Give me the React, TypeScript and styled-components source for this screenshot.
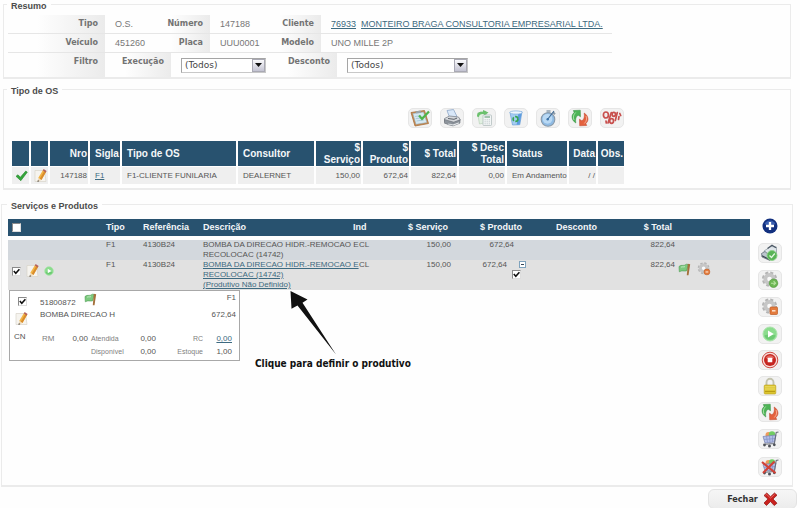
import React from 'react';
import styled, { createGlobalStyle } from 'styled-components';

const navy = '#28526f';
const line = '#ebebeb';
const linkColor = '#3d6a80';
const sans = '"Liberation Sans", Arial, sans-serif';
const verdana = '"DejaVu Sans", Verdana, sans-serif';
const tahoma = '"DejaVu Sans Condensed", "DejaVu Sans", Tahoma, sans-serif';

const GlobalStyle = createGlobalStyle`
  *, *::before, *::after { box-sizing: border-box; }
  body {
    margin: 0;
    background: #fefefe;
    color: #555;
    font: 8px/10px ${sans};
  }
  svg { display: block; flex: none; }
`;

/* ---------- shared parts ---------- */

const Page = styled.main`
  display: flex;
  flex-direction: column;
`;

const Section = styled.fieldset<{ $wide?: boolean; $above?: number; $below?: number }>`
  min-width: 0;
  margin: ${p => p.$above ?? 0}px ${p => (p.$wide ? 7 : 9)}px 0 ${p => (p.$wide ? 1 : 3)}px;
  padding: 0 ${p => (p.$wide ? 9 : 4)}px ${p => p.$below ?? 0}px ${p => (p.$wide ? 6 : 4)}px;
  border: 2px solid ${line};
  border-width: 1px 1px 2px;
`;

const Legend = styled.legend`
  margin-left: -1px;
  padding: 4px 4px 0;
  color: #4c4c4c;
  font-weight: bold;
  font-size: 9px;
  line-height: 12px;
`;

const Link = styled.a`
  color: ${linkColor};
  text-decoration: underline;
`;

const Check = styled.input.attrs({ type: 'checkbox' })`
  appearance: none;
  display: block;
  flex: none;
  width: 9px;
  height: 9px;
  margin: 0;
  border: 1px solid #8a8a8a;
  border-right-color: #ddd;
  border-bottom-color: #ddd;
  background: #fff center / 7px 7px no-repeat;
  &:checked {
    background-image: url("data:image/svg+xml,%3Csvg xmlns='http://www.w3.org/2000/svg' viewBox='0 0 7 7'%3E%3Cpath d='M.8 3l2 2.2L6.400 1.300' fill='none' stroke='%23111' stroke-width='1.600'/%3E%3C/svg%3E");
  }
`;

const IconButton = styled.button<{ $bare?: boolean }>`
  display: flex;
  align-items: center;
  justify-content: center;
  width: 24px;
  height: 20px;
  padding: 0;
  border: 1px solid ${p => (p.$bare ? 'transparent' : '#e6e6e6')};
  border-radius: 5px;
  background: ${p => (p.$bare ? 'none' : '#f2f2f2')};
  cursor: pointer;
`;

const MiniButton = styled.button`
  display: block;
  flex: none;
  padding: 0;
  border: 0;
  background: none;
  cursor: pointer;
`;

/* ---------- icons ---------- */

const Svg = ({ w = 20, h = 18, children }: { w?: number; h?: number; children: React.ReactNode }) => (
  <svg width={w} height={h} viewBox={`0 0 ${w} ${h}`} fill="none" aria-hidden="true">
    {children}
  </svg>
);

const ClipboardIcon = () => (
  <Svg>
    <path d="M1 3.500L14.500 1.500 18.500 14.500 5 17z" fill="#c98a4e" stroke="#a8703c" strokeWidth=".8" />
    <path d="M2.800 4.600L13.500 3l3.400 10.600L6 15.300z" fill="#d6e8f1" stroke="#8fa9b8" strokeWidth=".5" />
    <path d="M5 7.500l6-.9M5.700 9.700l7-1M6.500 12l7.500-1.100" stroke="#9ec3d8" strokeWidth=".8" />
    <path d="M5.500 2.500L10.500 1.500l.7 2.200-5 .9z" fill="#9ba6ac" />
    <path d="M9 6.500l3 3.300L19 2.500" stroke="#4fb54b" strokeWidth="2.200" />
  </Svg>
);

const PrinterIcon = () => (
  <Svg>
    <path d="M5 1.500l6.500-1 3.500 7-7 2z" fill="#d8e7f8" stroke="#8ea6c6" strokeWidth=".8" />
    <path d="M2.500 9.500l5-2.500 9 1 2 3-6 2.500-10-1z" fill="#d5d8dc" stroke="#777d85" strokeWidth=".7" />
    <path d="M2.500 10.500v3.700l8 2.500 7.500-2.800v-3l-6.500 2.300z" fill="#8d949c" stroke="#666c74" strokeWidth=".6" />
    <path d="M6 14.200l5 1 5.500-2 1.500 1-6.500 2.600-6-1.300z" fill="#f4f6f8" stroke="#7a828b" strokeWidth=".5" />
    <path d="M6 9.500l6 .8 3-1.200" stroke="#4e545b" strokeWidth=".9" />
  </Svg>
);

const SheetsIcon = () => (
  <Svg>
    <path d="M3.500 4l8-2 2 11-8 2z" fill="#e2f0e2" stroke="#b1cfb2" strokeWidth=".6" />
    <path d="M3 7.500C3 3 6.500 2.500 9 3V1l5.500 2.500L9.800 7V5C7 4.700 5 5.500 5 8z" fill="#6bc16d" />
    <rect x="9" y="6" width="8.500" height="10.500" rx=".8" fill="#f3f6f6" stroke="#aab7b7" strokeWidth=".7" />
    <path d="M10.500 8h5.500" stroke="#8ab398" strokeWidth="1.500" />
    <path d="M10.500 10.800h5.500M10.500 12.800h5.500M10.500 14.800h5.500" stroke="#b9c3c5" strokeWidth=".8" strokeDasharray="1.300 .8" />
  </Svg>
);

const BinIcon = () => (
  <Svg>
    <path d="M4 3.500l12-.8-2.200 13L6.500 16z" fill="#a5cdf3" stroke="#6b9fd6" strokeWidth=".7" />
    <path d="M12.500 3.500l3.300-.5-2.200 12.500-3 .3z" fill="#5c9ce0" />
    <ellipse cx="10" cy="3.500" rx="6.300" ry="1.600" fill="#eef6fd" stroke="#80aedc" strokeWidth=".7" />
    <circle cx="9.500" cy="10" r="2.400" stroke="#35a552" strokeWidth="1.700" strokeDasharray="3.600 1.300" />
  </Svg>
);

const StopwatchIcon = () => (
  <Svg>
    <path d="M8.500 1h4v3.500h-4z" fill="#a7b4bf" />
    <path d="M15 3.300l2 2" stroke="#8d9ba8" strokeWidth="2" />
    <circle cx="10" cy="10.500" r="6.800" fill="#8fbbe4" stroke="#8999a8" strokeWidth="1.100" />
    <circle cx="9.500" cy="9.800" r="4.900" fill="#b9d9f4" />
    <path d="M9.500 10.500L16 2" stroke="#3f6994" strokeWidth="1.100" />
    <circle cx="9.700" cy="10.300" r="1.200" fill="#3a72a8" />
  </Svg>
);

const RefreshIcon = () => (
  <Svg>
    <path d="M5.800 14C1.200 11 1 5.800 4.200 3.500L3.300 1.500l7-.3.200 6.600-2.300-1.600c-2.300 1-3 3.800-2.400 7.800z" fill="#4db456" stroke="#328a3c" strokeWidth=".5" />
    <path d="M14.200 4c4.600 3 4.800 8.200 1.600 10.500l.9 2-7 .3-.2-6.600 2.300 1.600c2.300-1 3-3.800 2.400-7.800z" fill="#e4613e" stroke="#b83f25" strokeWidth=".5" />
    <path d="M4 11c-1.200-2.500-.6-5.500 1.700-7.500" stroke="#a4e2a3" strokeWidth="1" />
    <path d="M16 7c1.200 2.500.6 5.500-1.700 7.500" stroke="#f7ac91" strokeWidth="1" />
  </Svg>
);

const PercentIcon = () => (
  <Svg>
    <g stroke="#c8504e" strokeWidth="1.700" strokeLinecap="round">
      <ellipse cx="3.900" cy="6" rx="2.500" ry="3" />
      <path d="M9.300 3.500L6 14" />
      <ellipse cx="9.600" cy="12" rx="1.900" ry="2.300" />
      <ellipse cx="11.800" cy="5.300" rx="1.700" ry="2" />
      <path d="M15.300 3.500l-2 8" />
      <path d="M4 12l.3 2M16.500 10.500l.5-3M17.800 4.500l.9 2" />
    </g>
    <path d="M3.700 6h.4M9.500 12h.3" stroke="#f3c3c0" strokeWidth="1.500" />
  </Svg>
);

const TickIcon = () => (
  <Svg w={13} h={12}>
    <path d="M1 6.300l2-1.500 2.300 2.500L10.800 1l1.500 1.200-6.500 8.500z" fill="#35a53a" stroke="#238a2c" strokeWidth=".6" />
  </Svg>
);

const PencilIcon = () => (
  <Svg w={13} h={14}>
    <path d="M1 1.500h9.500L12 12.500H1z" fill="#f6f4ef" stroke="#d8d4ca" strokeWidth=".7" />
    <path d="M9 1l3 2-4.600 8-3.200-2z" fill="#f2b445" />
    <path d="M10.300 1.900l1.700 1.100-4.600 8-1.700-1.100z" fill="#d98c2c" />
    <path d="M9.600 0l3 2-.8 1.400-3-2z" fill="#b5605b" />
    <path d="M4.200 9l3.200 2L3.500 13z" fill="#f0dcbb" />
    <path d="M3.800 11.200l1.500.9-1.800.9z" fill="#333" />
  </Svg>
);

const FlagIcon = () => (
  <Svg w={13} h={13}>
    <path d="M1 3.500c3-2.500 4 .3 7.500-2.300l2 .4-2 6.300C5.500 8.500 4 7 1.300 8.800z" fill="#7cc97e" stroke="#4c9b50" strokeWidth=".6" />
    <path d="M9.800.8l2.400.4-1.700 11H8.800z" fill="#a5713c" />
    <path d="M3 4.200c1.500-.8 2.500.1 4-.6" stroke="#c0ecbf" strokeWidth=".9" />
  </Svg>
);

const GearIcon = ({ badge, size = 18 }: { badge: 'green' | 'orange' | 'orangeDot'; size?: number }) => (
  <svg width={size} height={size} viewBox="0 0 18 18" fill="none" aria-hidden="true">
    <circle cx="8.500" cy="8" r="6.200" stroke="#b4b4b4" strokeWidth="2.800" strokeDasharray="2.900 1.970" />
    <circle cx="8.500" cy="8" r="4.200" stroke="#c6c6c6" strokeWidth="3.800" fill="#fafafa" />
    {badge === 'green' ? (
      <>
        <circle cx="12.500" cy="12.200" r="4.300" fill="#6cb653" stroke="#4d9638" strokeWidth=".6" />
        <path d="M10 12.200h3.500M12.600 10.200l2 2-2 2" stroke="#b7e3a0" strokeWidth="1.100" />
      </>
    ) : (
      <>
        <rect x="9" y="9" width="7.500" height="7.500" rx={badge === 'orangeDot' ? 3.700 : 1} fill="#e37b3d" stroke="#bd5a22" strokeWidth=".7" />
        <path d="M11 12.800h3.500" stroke="#fbdcc5" strokeWidth="1.600" />
      </>
    )}
  </svg>
);

const PlusIcon = () => (
  <Svg w={16} h={16}>
    <circle cx="8" cy="8" r="7.500" fill="#12307f" />
    <path d="M2.500 6a6 6 0 0111 0c-3 1.500-8 1.500-11 0z" fill="#3a5fb0" />
    <path d="M8 4v8M4 8h8" stroke="#fff" strokeWidth="2.300" />
  </Svg>
);

const DriveOkIcon = () => (
  <Svg>
    <path d="M4 7L11 2.500 16.500 3v9L6 14z" fill="#dfe5ea" stroke="#87939e" strokeWidth=".7" />
    <path d="M7.500 4.500L12 1.200l4 2.500" stroke="#4c5865" strokeWidth="1.200" />
    <path d="M1.500 9.500L5 7.500l7 6-2 3-8-3.500z" fill="#bcc6cf" stroke="#56636f" strokeWidth=".7" />
    <path d="M2 11.800l7.500 3.700" stroke="#3a4651" strokeWidth="1.100" />
    <circle cx="12" cy="11.500" r="5" fill="#58b455" stroke="#8fd18b" strokeWidth=".9" />
    <path d="M9.500 11.500l2 2 3.300-4" stroke="#e4f7e2" strokeWidth="1.300" />
  </Svg>
);

const PlayIcon = ({ size = 16 }: { size?: number }) => (
  <svg width={size} height={size} viewBox="0 0 16 16" fill="none" aria-hidden="true">
    <circle cx="8" cy="8" r="7" fill="#8bdc8d" stroke="#a9e3aa" strokeWidth="1" />
    <path d="M2.500 9.500a5.700 5.700 0 0011 0c-3-1.200-8-1.200-11 0z" fill="#6dca73" />
    <path d="M6 4.500L11.800 8 6 11.500z" fill="#fff" />
  </svg>
);

const StopIcon = () => (
  <Svg w={18} h={18}>
    <circle cx="9" cy="9" r="7.800" fill="#f6dcd9" stroke="#cf4b43" strokeWidth="1" />
    <circle cx="9" cy="9" r="6" fill="#c62520" />
    <path d="M4.500 7a5 5 0 019 0c-2.500 1-6.500 1-9 0z" fill="#e2635c" />
    <rect x="6.700" y="6.700" width="4.600" height="4.600" rx=".5" fill="#fff" />
  </Svg>
);

const LockIcon = () => (
  <Svg w={16} h={18}>
    <path d="M4.500 9V5.500a3.500 3.800 0 017 0V9" stroke="#c3c3ae" strokeWidth="1.900" />
    <rect x="2.200" y="8" width="11.600" height="9" rx="1" fill="#dcc52f" stroke="#b9a01c" strokeWidth=".6" />
    <path d="M3 9.800h10M3 12h10" stroke="#f0e27a" strokeWidth=".8" />
    <path d="M3 14.500h10" stroke="#b89c14" strokeWidth="1" />
  </Svg>
);

const CartIcon = ({ removed }: { removed?: boolean }) => (
  <Svg>
    <circle cx="8.500" cy="5" r="3" fill="#ef9a5b" />
    <circle cx="12" cy="4.500" r="3.200" fill="#70cc62" />
    <path d="M3 6.500l13-1.500-1.500 7L5 13z" fill="#b4bfe6" stroke="#7480ae" strokeWidth=".7" />
    <path d="M6.500 6.300l1 6.300M9.500 6l.5 6.300M12.700 5.600l-.4 6.500M4 9.500l11-1" stroke="#8290c6" strokeWidth=".7" />
    <path d="M18.500 2l-2.300.5-1.800 11-9.400.7" stroke="#6a6f7c" strokeWidth="1.100" />
    <g fill="#4e5158">
      <circle cx="4.500" cy="15" r="1.400" />
      <circle cx="9.500" cy="16" r="1.500" />
      <circle cx="14.300" cy="14.800" r="1.400" />
    </g>
    {removed && <path d="M2 4l13.500 11M14.500 3.500L3 15" stroke="#d24237" strokeWidth="2.200" />}
  </Svg>
);

const CloseIcon = () => (
  <Svg w={15} h={14}>
    <path d="M1 3.500L3.800 1l3.700 3.700L11.500 1 14 3.200 10 7l4 4.200-2.800 2.300-3.700-4-4 4L1 11l3.900-4z" fill="#c9211e" stroke="#8f1513" strokeWidth=".7" />
    <path d="M2.500 3.300l1.200-.9 3.800 3.700 4-3.600" stroke="#ee7773" strokeWidth=".8" />
  </Svg>
);

/* ---------- Resumo ---------- */

const Summary = styled.div`
  width: max-content;
  max-width: 100%;
  margin-top: 3px;
`;

const SummaryRow = styled.div<{ $filters?: boolean }>`
  display: ${p => (p.$filters ? 'flex' : 'grid')};
  grid-template-columns: 97px 49px 56px 51px 60px 1fr;
  width: ${p => (p.$filters ? 'max-content' : 'auto')};
  min-height: ${p => (p.$filters ? 24 : 19)}px;
  border-bottom: ${p => (p.$filters ? 0 : 1)}px solid #e6e6e6;
`;

const Label = styled.span<{ $width?: number }>`
  width: ${p => (p.$width ? p.$width + 'px' : 'auto')};
  padding: 1px 7px 0 0;
  background: linear-gradient(to right, #fefefe 30%, #ebebeb);
  color: #737373;
  font: bold 8px/16px ${verdana};
  text-align: right;
`;

const Value = styled.span`
  display: flex;
  gap: 5px;
  padding: 1px 9px 0 10px;
  color: #777;
  font-size: 9px;
  line-height: 16px;
  white-space: nowrap;
`;

const SelectBox = styled.label<{ $width: number }>`
  display: flex;
  align-self: center;
  width: ${p => p.$width}px;
  height: 15px;
  margin: 0 0 0 10px;
  border: 1px solid #a5a5a5;
  border-right-color: #c8c8c8;
  border-bottom-color: #c8c8c8;
  background: #fff;
`;

const Select = styled.select`
  appearance: none;
  flex: 1;
  min-width: 0;
  padding: 0 3px;
  border: 0;
  background: none;
  color: #444;
  font: 9px/13px ${verdana};
`;

const SelectArrow = styled.span`
  display: flex;
  align-items: center;
  justify-content: center;
  width: 13px;
  border: 1px solid #a9a9b4;
  background: linear-gradient(#fafafc, #c3c3d2);
  pointer-events: none;
`;

const Filter = ({ label, width, labelWidth }: { label: string; width: number; labelWidth: number }) => (
  <>
    <Label as="label" htmlFor={label} $width={labelWidth}>{label}</Label>
    <SelectBox $width={width}>
      <Select id={label} defaultValue="all">
        <option value="all">(Todos)</option>
      </Select>
      <SelectArrow>
        <Svg w={7} h={4}><path d="M0 0h7L3.500 4z" fill="#111" /></Svg>
      </SelectArrow>
    </SelectBox>
  </>
);

/* ---------- Tipo de OS ---------- */

const Toolbar = styled.div`
  display: flex;
  gap: 8px;
  margin: 11px 0 12px 400px;
`;

const OrderTable = styled.table`
  table-layout: fixed;
  width: 616px;
  margin-left: 2px;
  border-spacing: 2px 1px;
`;

const OrderHead = styled.th<{ $right?: boolean }>`
  height: 25px;
  padding: ${p => (p.$right ? '0 1px 0 0' : '0 0 0 5px')};
  background: ${navy};
  color: #f4f7f9;
  font: bold 10px/12px ${sans};
  text-align: ${p => (p.$right ? 'right' : 'left')};
`;

const OrderCell = styled.td<{ $right?: boolean; $icon?: boolean }>`
  height: 17px;
  padding: ${p => (p.$icon ? '0 0 0 3px' : p.$right ? '0 1px 0 0' : '0 0 0 5px')};
  background: #efefef;
  text-align: ${p => (p.$right ? 'right' : 'left')};
  white-space: nowrap;
`;

const orderColumns = [
  { title: '', width: 17 },
  { title: '', width: 17 },
  { title: 'Nro', width: 38, right: true },
  { title: 'Sigla', width: 30 },
  { title: 'Tipo de OS', width: 114 },
  { title: 'Consultor', width: 76 },
  { title: '$ Serviço', width: 45, right: true },
  { title: '$ Produto', width: 46, right: true },
  { title: '$ Total', width: 46, right: true },
  { title: '$ Desc Total', width: 46, right: true },
  { title: 'Status', width: 60 },
  { title: 'Data', width: 27, right: true },
  { title: 'Obs.', width: 26, right: true },
];

const orderValues: React.ReactNode[] = [
  <TickIcon />,
  <MiniButton aria-label="Editar"><PencilIcon /></MiniButton>,
  '147188',
  <Link href="#f1">F1</Link>,
  'F1-CLIENTE FUNILARIA',
  'DEALERNET',
  '150,00',
  '672,64',
  '822,64',
  '0,00',
  'Em Andamento',
  '/ /',
  '',
];

const tools = [
  { name: 'Conferir', icon: <ClipboardIcon /> },
  { name: 'Imprimir', icon: <PrinterIcon /> },
  { name: 'Copiar', icon: <SheetsIcon /> },
  { name: 'Lixeira', icon: <BinIcon /> },
  { name: 'Tempo', icon: <StopwatchIcon /> },
  { name: 'Atualizar', icon: <RefreshIcon /> },
  { name: 'Descontos', icon: <PercentIcon /> },
];

/* ---------- Serviços e Produtos ---------- */

const Work = styled.div`
  display: flex;
  align-items: flex-start;
  gap: 8px;
  padding: 4px 1px 8px 0;
`;

const WorkMain = styled.div`
  flex: 1;
  min-width: 0;
  padding-top: 3px;
`;

const ItemTable = styled.table`
  table-layout: fixed;
  width: 100%;
  border-collapse: collapse;
  tbody::before {
    content: '';
    display: block;
    height: 4px;
  }
`;

const ItemHead = styled.th<{ $right?: boolean; $pad?: number }>`
  height: 17px;
  padding: 0 ${p => p.$pad ?? 0}px 0 0;
  background: ${navy};
  color: #f4f7f9;
  font: bold 9px/11px ${sans};
  text-align: ${p => (p.$right ? 'right' : 'left')};
  &:first-child { padding-left: 4px; }
`;

const ItemRow = styled.tr<{ $plain?: boolean }>`
  background: ${p => (p.$plain ? '#e1e1e1' : '#d3d8dd')};
`;

const ItemCell = styled.td<{ $right?: boolean; $pad?: number; $indent?: number }>`
  padding: 0 ${p => p.$pad ?? 0}px 0 ${p => p.$indent ?? 0}px;
  text-align: ${p => (p.$right ? 'right' : 'left')};
  vertical-align: top;
  white-space: nowrap;
`;

const RowTools = styled.div<{ $top?: boolean }>`
  display: flex;
  align-items: center;
  gap: ${p => (p.$top ? 6 : 5)}px;
  padding: ${p => (p.$top ? '2px 0 0 3px' : '4px 0 0 4px')};
`;

const ProductTools = styled.div`
  display: grid;
  grid-template-columns: 56px 1fr;
  column-gap: 5px;
  align-items: center;
  > input { grid-column: 2; }
`;

const Collapse = styled.button`
  display: flex;
  align-items: center;
  justify-content: center;
  width: 7px;
  height: 7px;
  margin: 1px 0 2px 7px;
  padding: 0;
  border: 1px solid #7fa3bd;
  background: #fff;
  &::before {
    content: '';
    width: 3px;
    height: 1px;
    background: #345;
  }
`;

const Below = styled.div`
  display: flex;
  align-items: flex-start;
  gap: 15px;
`;

const ProductBox = styled.section`
  display: grid;
  grid-template-columns: 26px 1fr;
  width: 231px;
  min-height: 71px;
  margin-left: 1px;
  padding: 2px 3px 2px 4px;
  border: 1px solid #a8a8a8;
  background: #fff;
`;

const BoxSide = styled.div`
  display: flex;
  flex-direction: column;
  gap: 6px;
  padding-top: 4px;
  > input { margin-left: 4px; }
  > button { margin-left: 1px; }
`;

const BoxLine = styled.div<{ $first?: boolean }>`
  display: flex;
  align-items: ${p => (p.$first ? 'flex-start' : 'center')};
  gap: 8px;
  height: ${p => (p.$first ? 17 : 10)}px;
  > span:first-child { padding-top: ${p => (p.$first ? 5 : 0)}px; }
  > span:last-child { margin-left: auto; }
`;

const Stock = styled.dl`
  display: grid;
  grid-template-columns: 17px 29px 35px 33px 47px 29px;
  row-gap: 3px;
  margin: 14px 0 0 2px;
`;

const StockLabel = styled.dt<{ $right?: boolean; $column?: number }>`
  grid-column: ${p => p.$column ?? 'auto'};
  padding-left: ${p => (p.$right ? 0 : 3)}px;
  color: #808080;
  font-size: 7px;
  text-align: ${p => (p.$right ? 'right' : 'left')};
  white-space: nowrap;
  &:first-child { padding-left: 0; font-size: 8px; }
`;

const StockValue = styled.dd`
  margin: 0;
  text-align: right;
`;

const Note = styled.div`
  color: #111;
  font: bold 10px/14px ${tahoma};
  > svg { margin-left: 33px; }
`;

const SideBar = styled.div`
  display: flex;
  flex-direction: column;
  gap: 7px;
`;

const SideGroup = styled.div<{ $gap: number }>`
  display: flex;
  flex-direction: column;
  gap: ${p => p.$gap}px;
`;

const sideGroups = [
  {
    gap: 7,
    buttons: [
      { name: 'Adicionar', icon: <PlusIcon />, bare: true },
      { name: 'Aprovar', icon: <DriveOkIcon /> },
      { name: 'Liberar serviço', icon: <GearIcon badge="green" /> },
      { name: 'Remover serviço', icon: <GearIcon badge="orange" /> },
    ],
  },
  {
    gap: 6,
    buttons: [
      { name: 'Iniciar', icon: <PlayIcon /> },
      { name: 'Parar', icon: <StopIcon /> },
      { name: 'Bloquear', icon: <LockIcon /> },
      { name: 'Atualizar itens', icon: <RefreshIcon /> },
    ],
  },
  {
    gap: 8,
    buttons: [
      { name: 'Carrinho', icon: <CartIcon /> },
      { name: 'Cancelar carrinho', icon: <CartIcon removed /> },
    ],
  },
];

const Footer = styled.footer`
  display: flex;
  justify-content: flex-end;
  padding: 2px 3px 0;
`;

const CloseButton = styled.button`
  display: flex;
  align-items: center;
  justify-content: center;
  gap: 5px;
  width: 89px;
  height: 20px;
  padding: 0;
  border: 1px solid #e3e3e3;
  border-radius: 6px;
  background: linear-gradient(#f6f6f6, #ececec);
  color: #333;
  font: bold 9px/12px ${tahoma};
`;

const itemWidths = [98, 37, 60, 150, 32, 66, 73, 76, 75];

export default function App() {
  return (
    <Page>
      <GlobalStyle />

      <Section $above={-4}>
        <Legend>Resumo</Legend>
        <Summary>
          <SummaryRow>
            <Label>Tipo</Label>
            <Value>O.S.</Value>
            <Label>Número</Label>
            <Value>147188</Value>
            <Label>Cliente</Label>
            <Value>
              <Link href="#cliente">76933</Link>
              <Link href="#cliente">MONTEIRO BRAGA CONSULTORIA EMPRESARIAL LTDA.</Link>
            </Value>
          </SummaryRow>
          <SummaryRow>
            <Label>Veículo</Label>
            <Value>451260</Value>
            <Label>Placa</Label>
            <Value>UUU0001</Value>
            <Label>Modelo</Label>
            <Value>UNO MILLE 2P</Value>
          </SummaryRow>
          <SummaryRow $filters>
            <Label $width={97}>Filtro</Label>
            <Filter label="Execução" labelWidth={66} width={85} />
            <Filter label="Desconto" labelWidth={71} width={121} />
          </SummaryRow>
        </Summary>
      </Section>

      <Section $above={2} $below={3}>
        <Legend>Tipo de OS</Legend>
        <Toolbar>
          {tools.map(t => (
            <IconButton key={t.name} aria-label={t.name}>{t.icon}</IconButton>
          ))}
        </Toolbar>
        <OrderTable>
          <colgroup>
            {orderColumns.map((c, i) => <col key={i} width={c.width} />)}
          </colgroup>
          <thead>
            <tr>
              {orderColumns.map((c, i) => <OrderHead key={i} $right={c.right}>{c.title}</OrderHead>)}
            </tr>
          </thead>
          <tbody>
            <tr>
              {orderValues.map((v, i) => (
                <OrderCell key={i} $right={orderColumns[i].right} $icon={i < 2}>{v}</OrderCell>
              ))}
            </tr>
          </tbody>
        </OrderTable>
      </Section>

      <Section $wide $above={6}>
        <Legend>Serviços e Produtos</Legend>
        <Work>
          <WorkMain>
            <ItemTable>
              <colgroup>
                {itemWidths.map((w, i) => <col key={i} width={w} />)}
                <col />
              </colgroup>
              <thead>
                <tr>
                  <ItemHead><Check aria-label="Selecionar todos" /></ItemHead>
                  <ItemHead>Tipo</ItemHead>
                  <ItemHead>Referência</ItemHead>
                  <ItemHead>Descrição</ItemHead>
                  <ItemHead>Ind</ItemHead>
                  <ItemHead $right $pad={3}>$ Serviço</ItemHead>
                  <ItemHead $right $pad={2}>$ Produto</ItemHead>
                  <ItemHead $right $pad={3}>Desconto</ItemHead>
                  <ItemHead $right $pad={3}>$ Total</ItemHead>
                  <ItemHead />
                </tr>
              </thead>
              <tbody>
                <ItemRow>
                  <ItemCell />
                  <ItemCell>F1</ItemCell>
                  <ItemCell>4130B24</ItemCell>
                  <ItemCell>BOMBA DA DIRECAO HIDR.-REMOCAO E<br />RECOLOCAC (14742)</ItemCell>
                  <ItemCell $indent={6}>CL</ItemCell>
                  <ItemCell $right>150,00</ItemCell>
                  <ItemCell $right $pad={10}>672,64</ItemCell>
                  <ItemCell />
                  <ItemCell $right>822,64</ItemCell>
                  <ItemCell />
                </ItemRow>
                <ItemRow $plain>
                  <ItemCell>
                    <RowTools>
                      <Check defaultChecked aria-label="Selecionar 4130B24" />
                      <MiniButton aria-label="Editar"><PencilIcon /></MiniButton>
                      <MiniButton aria-label="Iniciar"><PlayIcon size={10} /></MiniButton>
                    </RowTools>
                  </ItemCell>
                  <ItemCell>F1</ItemCell>
                  <ItemCell>4130B24</ItemCell>
                  <ItemCell>
                    <Link href="#produtivo">
                      BOMBA DA DIRECAO HIDR.-REMOCAO E<br />RECOLOCAC (14742)<br />(Produtivo Não Definido)
                    </Link>
                  </ItemCell>
                  <ItemCell $indent={6}>CL</ItemCell>
                  <ItemCell $right>150,00</ItemCell>
                  <ItemCell $right>
                    <ProductTools>
                      <span>672,64</span>
                      <Collapse aria-label="Recolher" />
                      <Check defaultChecked aria-label="Produto" />
                    </ProductTools>
                  </ItemCell>
                  <ItemCell />
                  <ItemCell $right>822,64</ItemCell>
                  <ItemCell>
                    <RowTools $top>
                      <FlagIcon />
                      <MiniButton aria-label="Remover"><GearIcon badge="orangeDot" size={14} /></MiniButton>
                    </RowTools>
                  </ItemCell>
                </ItemRow>
              </tbody>
            </ItemTable>

            <Below>
              <ProductBox>
                <BoxSide>
                  <Check defaultChecked aria-label="Selecionar 51800872" />
                  <MiniButton aria-label="Editar"><PencilIcon /></MiniButton>
                  <span>CN</span>
                </BoxSide>
                <div>
                  <BoxLine $first>
                    <span>51800872</span>
                    <FlagIcon />
                    <span>F1</span>
                  </BoxLine>
                  <BoxLine>
                    <span>BOMBA DIRECAO H</span>
                    <span>672,64</span>
                  </BoxLine>
                  <Stock>
                    <StockLabel>RM</StockLabel>
                    <StockValue>0,00</StockValue>
                    <StockLabel>Atendida</StockLabel>
                    <StockValue>0,00</StockValue>
                    <StockLabel $right>RC</StockLabel>
                    <StockValue><Link href="#rc">0,00</Link></StockValue>
                    <StockLabel $column={3}>Disponível</StockLabel>
                    <StockValue>0,00</StockValue>
                    <StockLabel $right>Estoque</StockLabel>
                    <StockValue>1,00</StockValue>
                  </Stock>
                </div>
              </ProductBox>
              <Note>
                <Svg w={50} h={67}>
                  <path d="M2.500 1L19.500 9.500l-5 3.200L48 64.500 9.500 15.500l-6 3.300z" fill="#111" />
                </Svg>
                Clique para definir o produtivo
              </Note>
            </Below>
          </WorkMain>

          <SideBar>
            {sideGroups.map(g => (
              <SideGroup key={g.gap} $gap={g.gap}>
                {g.buttons.map(b => (
                  <IconButton key={b.name} aria-label={b.name} $bare={b.bare}>{b.icon}</IconButton>
                ))}
              </SideGroup>
            ))}
          </SideBar>
        </Work>
      </Section>

      <Footer>
        <CloseButton>
          Fechar
          <CloseIcon />
        </CloseButton>
      </Footer>
    </Page>
  );
}
